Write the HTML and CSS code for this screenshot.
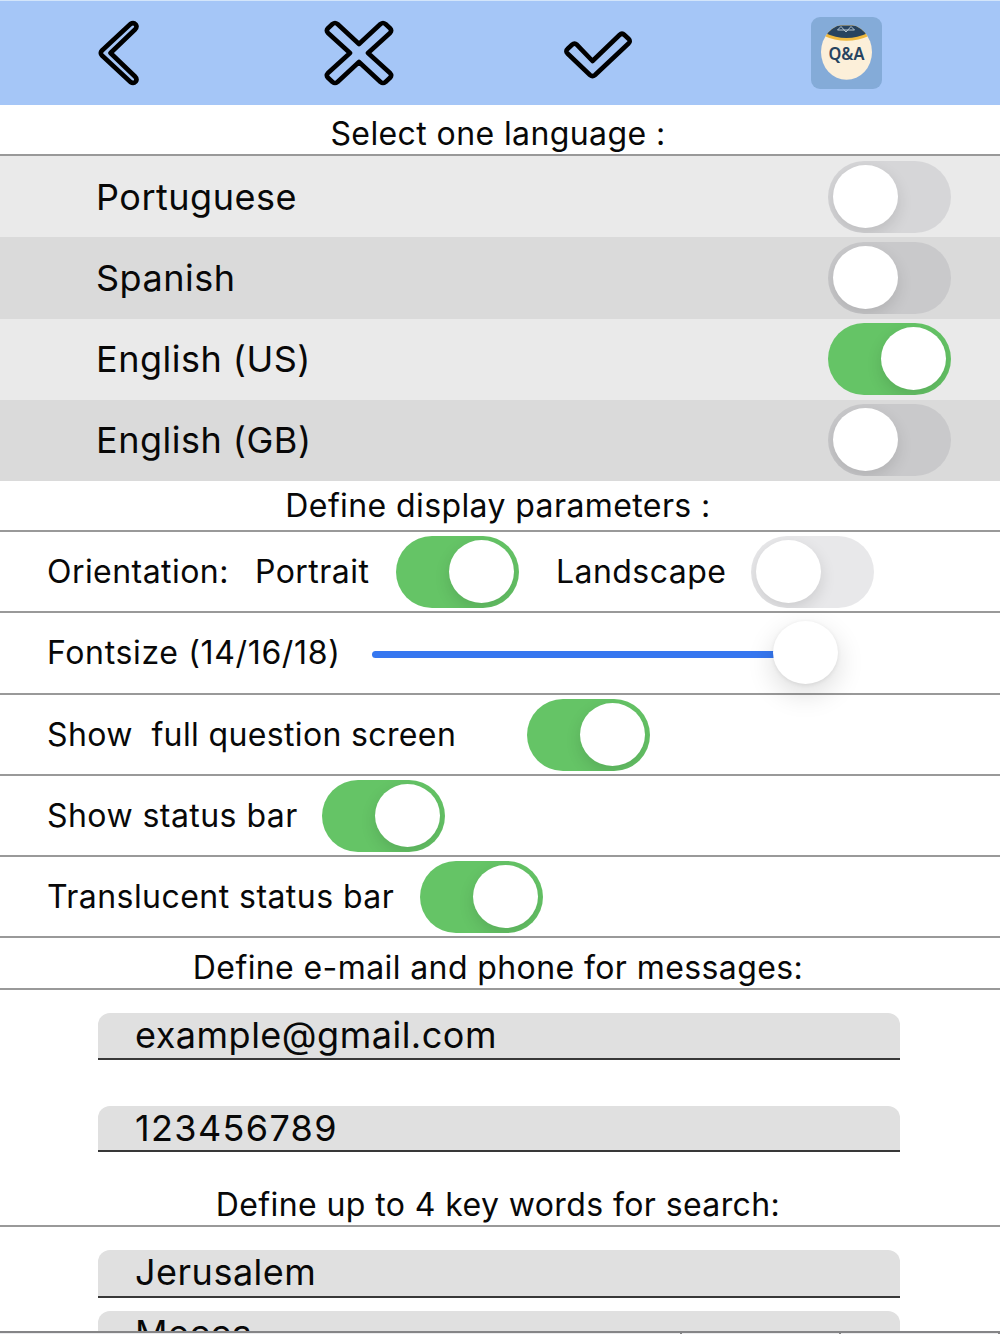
FILE: index.html
```html
<!DOCTYPE html>
<html lang="en">
<head>
    <meta charset="UTF-8">
    <meta name="viewport" content="width=device-width, initial-scale=1.0">
    <title>Settings</title>
    <link rel="stylesheet" href="styles.css">
</head>
<body>
    <div class="screen">
        <header class="toolbar">
            <!-- Back -->
            <svg class="icon-back" viewBox="0 0 44 68" width="44" height="68">
                <path d="M33.500 5 L5 31.500 Q2.500 34 5 36.500 L33.500 63 Q36.500 65 38.800 62.500 Q40.500 60 38 57.500 L13.500 34 L38 10.500 Q40.500 8 38.800 5.500 Q36.500 3 33.500 5 Z"/>
            </svg>
            <!-- Cancel -->
            <svg class="icon-cancel" viewBox="0 0 72 68" width="72" height="68">
                <path d="M36 25 L57.500 5 Q60 3 62.500 5 L67 9.200 Q69.200 11.500 67 14 L45 34 L67 54 Q69.200 56.500 67 58.800 L62.500 63 Q60 65 57.500 63 L36 43 L14.500 63 Q12 65 9.500 63 L5 58.800 Q2.800 56.500 5 54 L27 34 L5 14 Q2.800 11.500 5 9.200 L9.500 5 Q12 3 14.500 5 Z"/>
            </svg>
            <!-- Confirm -->
            <svg class="icon-ok" viewBox="0 0 72 52" width="72" height="52">
                <path d="M30.500 34 L57.500 8 Q60 5.500 62.500 8 L66.500 11.700 Q69 14.200 66.500 16.500 L33 48 Q30.500 50.200 28 48 L5.500 26.500 Q3.200 24 5.500 22 L10 17.800 Q12.500 15.500 15 17.800 Z"/>
            </svg>
            <!-- App logo -->
            <svg class="logo" viewBox="0 0 71 72" width="71" height="72">
                <clipPath id="ball"><ellipse cx="35.500" cy="35" rx="25.500" ry="27.800"/></clipPath>
                <rect width="71" height="72" rx="9" fill="#84abd8"/>
                <g clip-path="url(#ball)">
                    <rect y="8.500" width="71" height="60" fill="#fcefd9"/>
                    <path d="M12 8.500 H59 V18.500 Q35.500 29 12 18.500 Z" fill="#efb83e"/>
                    <path d="M14 8.500 H57 V16 Q35.500 26 14 16 Z" fill="#27435f"/>
                    <path d="M26.500 13 H43.500 L40 9.500 L35 15 L30 9.500 Z" fill="none" stroke="#b6c5d1" stroke-width="1"/>
                </g>
                <text x="35.500" y="43" text-anchor="middle" textLength="36" lengthAdjust="spacingAndGlyphs">Q&amp;A</text>
            </svg>
        </header>

        <h2 class="title">Select one language :</h2>
        <div class="languages">
            <div class="language"><span>Portuguese</span><span class="switch"></span></div>
            <div class="language"><span>Spanish</span><span class="switch"></span></div>
            <div class="language"><span>English (US)</span><span class="switch on"></span></div>
            <div class="language"><span>English (GB)</span><span class="switch"></span></div>
        </div>

        <h2 class="title title-display">Define display parameters :</h2>
        <div class="row">
            <span class="label label-orientation">Orientation:</span>
            <span class="label label-portrait">Portrait</span>
            <span class="switch on"></span>
            <span class="label label-landscape">Landscape</span>
            <span class="switch"></span>
        </div>
        <div class="row">
            <span class="label label-font">Fontsize (14/16/18)</span>
            <div class="slider"><span class="track"></span><span class="thumb"></span></div>
        </div>
        <div class="row">
            <span class="label label-full">Show&nbsp; full question screen</span>
            <span class="switch on"></span>
        </div>
        <div class="row">
            <span class="label label-status">Show status bar</span>
            <span class="switch on"></span>
        </div>
        <div class="row">
            <span class="label label-translucent">Translucent status bar</span>
            <span class="switch on"></span>
        </div>

        <h2 class="title title-contact">Define e-mail and phone for messages:</h2>
        <div class="fields contact">
            <div class="field field-mail">example@gmail.com</div>
            <div class="field field-phone">123456789</div>
        </div>

        <h2 class="title title-keywords">Define up to 4 key words for search:</h2>
        <div class="fields keywords">
            <div class="field">Jerusalem</div>
            <div class="field">Mecca</div>
        </div>
        <!-- Top edge of the keyboard suggestions -->
        <div class="keyboard"><span></span><span></span><span></span></div>
    </div>
</body>
</html>
```
FILE: styles.css
```css
* {
    box-sizing: border-box;
    margin: 0;
    padding: 0;
}

body {
    background-color: #fff;
    color: #080808;
    font-family: Inter, "Liberation Sans", sans-serif;
}

.screen {
    display: flex;
    flex-direction: column;
    width: 1000px;
    height: 1334px;
    overflow: hidden;
}

.screen > * {
    flex-shrink: 0;
}

.toolbar {
    display: flex;
    align-items: center;
    height: 105px;
    background-color: #a5c6f7;
    border-top: 1px solid #d3e5fa;
}

.icon-back,
.icon-cancel,
.icon-ok {
    fill: none;
    stroke: #000;
    stroke-width: 4.6px;
    stroke-linejoin: round;
}

.icon-back {
    margin-left: 97px;
}

.icon-cancel {
    margin-left: 182px;
}

.icon-ok {
    margin-left: 167px;
}

.logo {
    margin-left: 177px;
}

.logo text {
    font-family: "Noto Sans", sans-serif;
    font-size: 17px;
    font-weight: 600;
    fill: #27435f;
}

.title {
    height: 51px;
    padding: 4px 4px 0 0;
    border-bottom: 2px solid #999;
    font-size: 32px;
    font-weight: 400;
    letter-spacing: 0.4px;
    line-height: 49px;
    text-align: center;
    white-space: nowrap;
}

.language {
    display: flex;
    align-items: center;
    justify-content: space-between;
    height: 81.25px;
    padding: 0 49px 0 96px;
    background-color: #eaeaea;
    font-size: 36px;
    letter-spacing: 0.5px;
}

.language:nth-child(even) {
    background-color: #dadada;
}

/* iOS style switch */
.switch {
    display: flex;
    flex-shrink: 0;
    width: 123px;
    height: 72px;
    padding: 4px 5px;
    border-radius: 36px;
    background-color: rgba(120, 120, 128, 0.17);
    overflow: hidden;
}

.switch::before {
    content: "";
    width: 65px;
    height: 63px;
    border-radius: 50%;
    background-color: #fff;
    box-shadow: 0 6px 16px rgba(0, 0, 0, 0.12);
}

.switch.on {
    justify-content: flex-end;
    background-color: #65c466;
}

.row {
    display: flex;
    align-items: center;
    height: 81.25px;
    padding-left: 47px;
    border-bottom: 2px solid #999;
    font-size: 32px;
    letter-spacing: 0.45px;
}

.row .switch {
    margin-top: 1px;
}

.label {
    flex-shrink: 0;
    white-space: nowrap;
}

.label-orientation {
    width: 208px;
}

.label-portrait {
    width: 141px;
}

.label-landscape {
    width: 195px;
    margin-left: 37px;
}

.label-font {
    width: 325px;
    letter-spacing: 0.65px;
}

.label-full {
    width: 480px;
    letter-spacing: 0.36px;
}

.label-status {
    width: 275px;
}

.label-translucent {
    width: 373px;
}

.slider {
    display: flex;
    align-items: center;
}

.track {
    width: 404px;
    height: 7px;
    margin-top: 3px;
    border-radius: 4px 0 0 4px;
    background-color: #3677f0;
}

.thumb {
    width: 65px;
    height: 63px;
    margin-left: -3px;
    border-radius: 50%;
    background-color: #fff;
    box-shadow: 0 10px 28px rgba(0, 0, 0, 0.14), 0 1px 4px rgba(0, 0, 0, 0.08);
}

.title-display {
    padding-top: 0;
}

.title-contact {
    height: 52px;
    padding-top: 5px;
}

.title-keywords {
    margin-top: 23.5px;
}

.fields {
    display: flex;
    flex-direction: column;
    padding: 23px 100px 0 98px;
}

.contact {
    gap: 46px;
}

.keywords {
    gap: 13px;
    height: 104.25px;
    padding-top: 23.5px;
    overflow: hidden;
}

.field {
    flex-shrink: 0;
    height: 46.5px;
    padding-left: 37px;
    border-bottom: 2px solid #383838;
    border-radius: 12px 12px 0 0;
    background-color: #e0e0e0;
    font-size: 36px;
    letter-spacing: 0.5px;
    line-height: 45px;
}

.keywords .field {
    height: 47.5px;
}

.field-phone {
    letter-spacing: 1.35px;
}

.keyboard {
    display: flex;
    justify-content: flex-end;
    height: 3px;
    border-top: 2px solid #858587;
    background-color: #ececee;
}

.keyboard span {
    width: 2px;
    margin-left: 157px;
    background-color: #858587;
}
```
